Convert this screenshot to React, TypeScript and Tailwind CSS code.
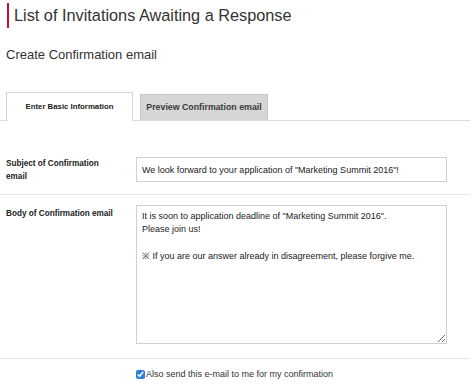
import React from "react";

export default function App() {
  const body =
    'It is soon to application deadline of "Marketing Summit 2016".\nPlease join us!\n\n※ If you are our answer already in disagreement, please forgive me.';
  return (
    <div className="w-[474px] h-[389px] bg-white overflow-hidden font-['Liberation_Sans',Arial,sans-serif] text-[#333]">
      {/* Title */}
      <div className="flex items-center pl-[7px] pt-[3px]">
        <div className="w-[2px] h-[25px] bg-[#c8102e]" />
        <h1 className="ml-[5px] text-[16.3px] leading-[25px] text-[#333]">
          List of Invitations Awaiting a Response
        </h1>
      </div>

      {/* Subtitle */}
      <div className="pl-[6px] mt-[19px] text-[13px] leading-[16px] text-[#333]">
        Create Confirmation email
      </div>

      {/* Tabs */}
      <div className="mt-[29px] flex items-end pl-[6px] border-b border-[#dcdcdc] mr-[4px]">
        <div className="-mb-px w-[127px] h-[29px] bg-white border border-b-0 border-[#d6d6d6] flex items-center justify-center text-[7.8px] font-bold text-[#222]">
          Enter Basic Information
        </div>
        <div className="ml-[7px] w-[128px] h-[26px] bg-[#d6d6d6] border border-b-0 border-[#c6c6c6] flex items-center justify-center text-[8.8px] font-bold text-[#3a3a3a]">
          Preview Confirmation email
        </div>
      </div>

      {/* Subject row */}
      <div className="mt-[36px] flex">
        <div className="w-[136px] pl-[6px] pr-[20px] text-[8.2px] font-bold leading-[13px] text-[#222]">
          Subject of Confirmation email
        </div>
        <input
          readOnly
          value={'We look forward to your application of "Marketing Summit 2016"!'}
          className="w-[311px] h-[25px] border border-[#d0d0d0] px-[5px] text-[9px] text-[#222] outline-none bg-white"
        />
      </div>

      <div className="mt-[11px] h-px bg-[#e6e6e6] mr-[4px]" />

      {/* Body row */}
      <div className="mt-[10px] flex">
        <div className="w-[136px] pl-[6px] pt-[2px] text-[8.2px] font-bold leading-[13px] text-[#222]">
          Body of Confirmation email
        </div>
        <textarea
          readOnly
          value={body}
          className="w-[311px] h-[139px] border border-[#d0d0d0] px-[5px] pt-[4px] text-[9px] leading-[13.3px] text-[#222] outline-none bg-white resize"
        />
      </div>

      <div className="mt-[14px] h-px bg-[#e6e6e6] mr-[4px]" />

      {/* Checkbox */}
      <div className="mt-[10px] flex items-center pl-[136px]">
        <input
          type="checkbox"
          readOnly
          checked
          className="m-0 w-[9px] h-[9px] accent-[#2f7fd8]"
        />
        <span className="ml-[1px] text-[9px] leading-[11px] text-[#333]">
          Also send this e-mail to me for my confirmation
        </span>
      </div>
    </div>
  );
}
